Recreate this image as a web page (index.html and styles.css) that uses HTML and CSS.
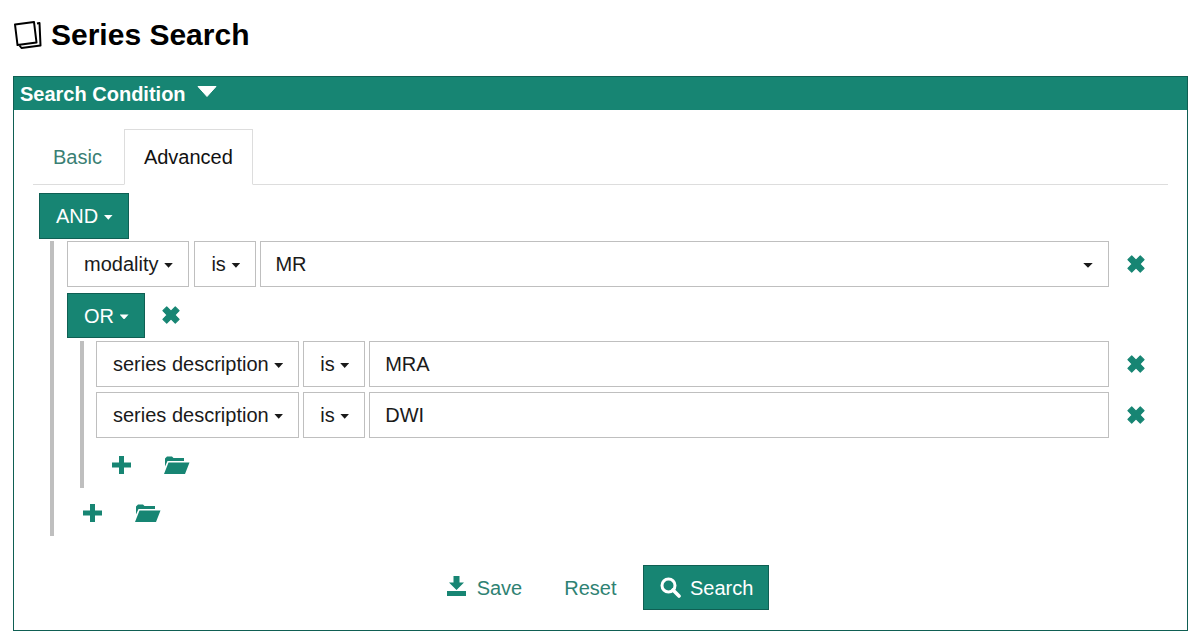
FILE: index.html
```html
<!DOCTYPE html>
<html lang="en">
<head>
<meta charset="utf-8">
<title>Series Search</title>
<link rel="stylesheet" href="styles.css">
</head>
<body>
<h1 class="page-title">
  <svg class="title-icon" viewBox="0 0 30 30"><path d="M2 4.500 21 2 23.500 22.500 4.500 25Z" fill="none" stroke="#000" stroke-width="2" stroke-linejoin="round"/><path d="M24 3.500 26.500 3 27.500 25.500 8.500 28 6.500 25.500" fill="none" stroke="#000" stroke-width="2" stroke-linejoin="round"/></svg>
  <span>Series Search</span>
</h1>
<section class="panel">
  <header class="panel-head">
    <span>Search Condition</span>
    <svg class="head-arrow" viewBox="0 0 20 11"><path d="M1 0.500H19L10 10.500Z" fill="#fff" stroke="#fff" stroke-linejoin="round"/></svg>
  </header>
  <div class="panel-body">
    <nav class="tabs">
      <a class="tab">Basic</a>
      <a class="tab tab-active">Advanced</a>
    </nav>
    <div class="tree">
      <button class="btn btn-primary">AND <i class="caret"></i></button>
      <div class="group">
        <div class="row">
          <button class="btn btn-field key-short">modality <i class="caret"></i></button>
          <button class="btn btn-field op">is <i class="caret"></i></button>
          <div class="input input-select"><span>MR</span><i class="caret caret-large"></i></div>
          <span class="remove"><svg class="icon-x" viewBox="1 1 16 16"><path d="M1.800 5.200 5.200 1.800 9 5.600 12.800 1.800 16.200 5.200 12.400 9 16.200 12.800 12.800 16.200 9 12.400 5.200 16.200 1.800 12.800 5.600 9Z" fill="#178573" stroke="#178573" stroke-linejoin="round"/></svg></span>
        </div>
        <div class="row row-or">
          <button class="btn btn-primary">OR <i class="caret"></i></button>
          <span class="remove"><svg class="icon-x" viewBox="1 1 16 16"><path d="M1.800 5.200 5.200 1.800 9 5.600 12.800 1.800 16.200 5.200 12.400 9 16.200 12.800 12.800 16.200 9 12.400 5.200 16.200 1.800 12.800 5.600 9Z" fill="#178573" stroke="#178573" stroke-linejoin="round"/></svg></span>
        </div>
        <div class="group group-nested">
          <div class="row row-tight">
            <button class="btn btn-field key">series description <i class="caret"></i></button>
            <button class="btn btn-field op">is <i class="caret"></i></button>
            <div class="input"><span>MRA</span></div>
            <span class="remove"><svg class="icon-x" viewBox="1 1 16 16"><path d="M1.800 5.200 5.200 1.800 9 5.600 12.800 1.800 16.200 5.200 12.400 9 16.200 12.800 12.800 16.200 9 12.400 5.200 16.200 1.800 12.800 5.600 9Z" fill="#178573" stroke="#178573" stroke-linejoin="round"/></svg></span>
          </div>
          <div class="row row-last">
            <button class="btn btn-field key">series description <i class="caret"></i></button>
            <button class="btn btn-field op">is <i class="caret"></i></button>
            <div class="input"><span>DWI</span></div>
            <span class="remove"><svg class="icon-x" viewBox="1 1 16 16"><path d="M1.800 5.200 5.200 1.800 9 5.600 12.800 1.800 16.200 5.200 12.400 9 16.200 12.800 12.800 16.200 9 12.400 5.200 16.200 1.800 12.800 5.600 9Z" fill="#178573" stroke="#178573" stroke-linejoin="round"/></svg></span>
          </div>
          <div class="adders">
            <span class="adder"><svg class="icon-plus" viewBox="0 0 19 18"><path d="M7 0H12V6.500H19V11.500H12V18H7V11.500H0V6.500H7Z" fill="#178573"/></svg></span>
            <span class="adder"><svg class="icon-folder" viewBox="0 0 26 18"><path d="M1 2.500 3 0.500H8L9.500 2H20V5H3.500L1 10.500Z M4.500 6.500H25.500L21 18H0Z" fill="#178573"/></svg></span>
          </div>
        </div>
        <div class="adders">
          <span class="adder"><svg class="icon-plus" viewBox="0 0 19 18"><path d="M7 0H12V6.500H19V11.500H12V18H7V11.500H0V6.500H7Z" fill="#178573"/></svg></span>
          <span class="adder"><svg class="icon-folder" viewBox="0 0 26 18"><path d="M1 2.500 3 0.500H8L9.500 2H20V5H3.500L1 10.500Z M4.500 6.500H25.500L21 18H0Z" fill="#178573"/></svg></span>
        </div>
      </div>
    </div>
    <footer class="actions">
      <a class="btn btn-link"><svg class="icon-save" viewBox="0 0 19 20"><path d="M6.500 0H12.500V6.500H17L9.500 14 2 6.500H6.500Z M0 15H19V20H0Z" fill="#178573"/></svg>Save</a>
      <a class="btn btn-link">Reset</a>
      <button class="btn btn-primary btn-search"><svg class="icon-search" viewBox="0 0 21 21"><circle cx="8.500" cy="8.500" r="6.500" fill="none" stroke="#fff" stroke-width="3"/><path d="M13 13 19 19" stroke="#fff" stroke-width="3.600" stroke-linecap="round"/></svg>Search</button>
    </footer>
  </div>
</section>
</body>
</html>
```
FILE: styles.css
```css
* { box-sizing: border-box; }
html, body { margin: 0; background: #fff; }
body {
  width: 1200px;
  height: 640px;
  overflow: hidden;
  padding: 0 12px 0 13px;
  font-family: "Liberation Sans", Arial, sans-serif;
  font-size: 20px;
  color: #000;
}
.page-title {
  display: flex;
  align-items: center;
  gap: 8px;
  height: 76px;
  margin: 0;
  padding: 0 0 6px 0;
  font-size: 30px;
  font-weight: 700;
}
.title-icon { width: 30px; height: 30px; flex: none; }
.panel { border: 1px solid #0f5f53; height: 555px; }
.panel-head {
  display: flex;
  align-items: center;
  gap: 11px;
  height: 33px;
  padding: 2px 6px 0;
  background: #178573;
  color: #fff;
  font-weight: 700;
}
.head-arrow { width: 20px; height: 11px; margin-top: -7px; }
.panel-body { padding: 19px 19px 0; }
.tabs { display: flex; height: 56px; border-bottom: 1px solid #ddd; }
.tab {
  height: 56px;
  margin-right: 2px;
  padding: 0 19px;
  line-height: 55px;
  border: 1px solid transparent;
  color: #3a7f74;
}
.tab-active { border-color: #ddd; border-bottom-color: #fff; color: #111; }
.tree { padding: 8px 6px 0; }
.btn {
  display: inline-flex;
  align-items: center;
  flex: none;
  height: 45.6px;
  padding: 2px 15px 0 16px;
  border: 1px solid transparent;
  background: none;
  font: inherit;
  white-space: pre;
}
.btn-primary { background: #178573; border-color: #0f5f53; color: #fff; }
.btn-field { background: #fff; border-color: #bfbfbf; color: #1a1a1a; }
.key { margin-right: 4px; }
.key-short { margin-right: 5.4px; }
.op { margin-right: 4px; }
.btn-link { color: #2f8273; }
.caret {
  display: inline-block;
  width: 9px;
  height: 5px;
  margin-top: 1px;
  background: currentColor;
  clip-path: polygon(0 0, 100% 0, 50% 100%);
}
.caret-large { width: 10px; }
.group {
  margin: 2.4px 0 0 11px;
  padding: 0 0 0 13px;
  border-left: 4px solid #bfbfbf;
}
.group-nested { margin: 0 0 2px 13px; padding-left: 12px; }
.row { display: flex; align-items: stretch; margin-bottom: 6px; }
.row-or { margin-bottom: 3px; }
.row-tight { margin-bottom: 5.2px; }
.row-last { margin-bottom: 4px; }
.input {
  flex: 1;
  display: flex;
  align-items: center;
  justify-content: space-between;
  height: 45.6px;
  padding: 2px 15px 0 15px;
  border: 1px solid #bfbfbf;
  color: #1a1a1a;
}
.input-select { padding-left: 14px; }
.remove {
  display: flex;
  align-items: center;
  justify-content: center;
  flex: none;
  width: 53px;
}
.icon-x { width: 18px; height: 18px; }
.adders { display: flex; align-items: center; height: 46px; }
.adder { display: flex; align-items: center; padding: 0 16px; }
.adder + .adder { margin-left: 1px; }
.icon-plus { width: 19px; height: 18px; }
.icon-folder { width: 26px; height: 18px; }
.actions {
  display: flex;
  justify-content: center;
  gap: 9px;
  margin-top: 29px;
}
.btn-search { margin-left: 2px; }
.icon-save { width: 19px; height: 20px; margin: -5px 11px 0 -2px; }
.icon-search { width: 21px; height: 21px; margin: -2px 8.5px 0 0; }
```
